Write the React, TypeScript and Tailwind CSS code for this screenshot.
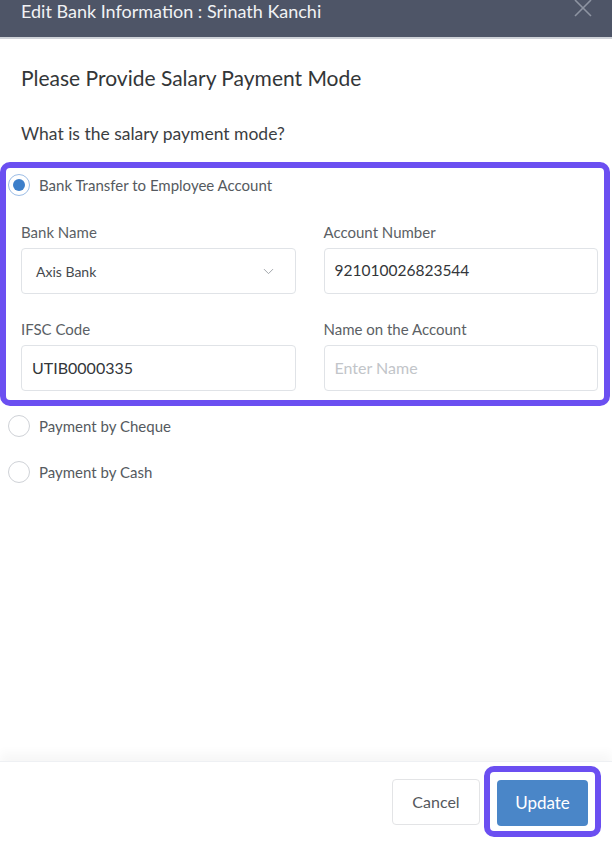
import { ChevronDown } from 'lucide-react'

const font = { fontFamily: 'Lato, "Open Sans", sans-serif' }

function Radio({ checked, label }: { checked?: boolean; label: string }) {
  return (
    <label className="flex h-[22px] items-center gap-[9px]">
      <span
        className={
          checked
            ? 'flex h-[22px] w-[22px] items-center justify-center rounded-full border-[1.5px] border-[#9cbde6] bg-white'
            : 'flex h-[22px] w-[22px] items-center justify-center rounded-full border-[1.5px] border-[#cfd2d7] bg-white'
        }
      >
        {checked && <span className="h-[12px] w-[12px] rounded-full bg-[#3d7fca]" />}
      </span>
      <span className="text-[15px] text-[#555a60]">{label}</span>
    </label>
  )
}

function Field({ label, children }: { label: string; children: React.ReactNode }) {
  return (
    <div className="flex flex-col">
      <span className="mb-[8px] h-[16px] text-[15px] leading-[16px] text-[#5b5f65]">{label}</span>
      {children}
    </div>
  )
}

const box = 'flex h-[46px] items-center rounded-[4px] border border-[#e0e3e7] bg-white'

export default function App() {
  return (
    <div className="flex h-[864px] w-[612px] flex-col overflow-hidden bg-white" style={font}>
      <header className="flex h-[39px] shrink-0 items-start justify-between border-b-2 border-[#cfd2d8] bg-[#4e5567] pl-[21px] pr-[19px]">
        <h1 className="text-[18px] leading-[22px] text-[#f1f2f4]">Edit Bank Information : Srinath Kanchi</h1>
        <svg width="20" height="20" viewBox="0 0 20 20" className="mt-[-1px]">
          <path d="M2 1 L18 17 M18 1 L2 17" stroke="#8e94a2" strokeWidth="1.6" fill="none" />
        </svg>
      </header>

      <main className="flex-1">
        <div className="px-[21px] pt-[27px]">
          <h2 className="text-[21px] leading-[24px] text-[#333638]">Please Provide Salary Payment Mode</h2>
          <p className="mt-[33px] text-[17.5px] leading-[22px] text-[#3b3e42]">What is the salary payment mode?</p>
        </div>

        <section className="mr-[2px] mt-[17px] rounded-[10px] border-[6px] border-[#6b4ff1] pb-[9px] pt-[6px]">
          <div className="pl-[2px]">
            <Radio checked label="Bank Transfer to Employee Account" />
          </div>
          <div className="mt-[28px] grid grid-cols-2 gap-x-[28px] gap-y-[27px] pl-[15px] pr-[6px]">
            <Field label="Bank Name">
              <div className={`${box} justify-between pl-[14px] pr-[18px]`}>
                <span className="text-[14px] text-[#45494e]">Axis Bank</span>
                <ChevronDown size={17} strokeWidth={1.3} className="text-[#9a9ea4]" />
              </div>
            </Field>
            <Field label="Account Number">
              <div className={`${box} px-[10px]`}>
                <span className="text-[15.5px] text-[#333639]">921010026823544</span>
              </div>
            </Field>
            <Field label="IFSC Code">
              <div className={`${box} px-[10px]`}>
                <span className="text-[16px] text-[#333639]">UTIB0000335</span>
              </div>
            </Field>
            <Field label="Name on the Account">
              <div className={`${box} px-[10px]`}>
                <span className="text-[16px] text-[#c2c5c9]">Enter Name</span>
              </div>
            </Field>
          </div>
        </section>

        <div className="flex flex-col gap-[24px] pl-[8px] pt-[9px]">
          <Radio label="Payment by Cheque" />
          <Radio label="Payment by Cash" />
        </div>
      </main>

      <footer className="flex h-[103px] shrink-0 items-start justify-end border-t border-[#eef0f3] pr-[11px] pt-[4px] shadow-[0_-8px_10px_rgba(0,0,0,0.035)]">
        <div className="flex items-center gap-[4px]">
          <button className="h-[46px] w-[88px] rounded-[4px] border border-[#e3e4e6] bg-white text-[16px] text-[#55585c]">
            Cancel
          </button>
          <div className="rounded-[10px] border-[6px] border-[#6b4ff1] px-[7px] pb-[5px] pt-[8px]">
            <button className="h-[46px] w-[91px] rounded-[4px] bg-[#4a86c8] text-[17px] text-white">Update</button>
          </div>
        </div>
      </footer>
    </div>
  )
}
